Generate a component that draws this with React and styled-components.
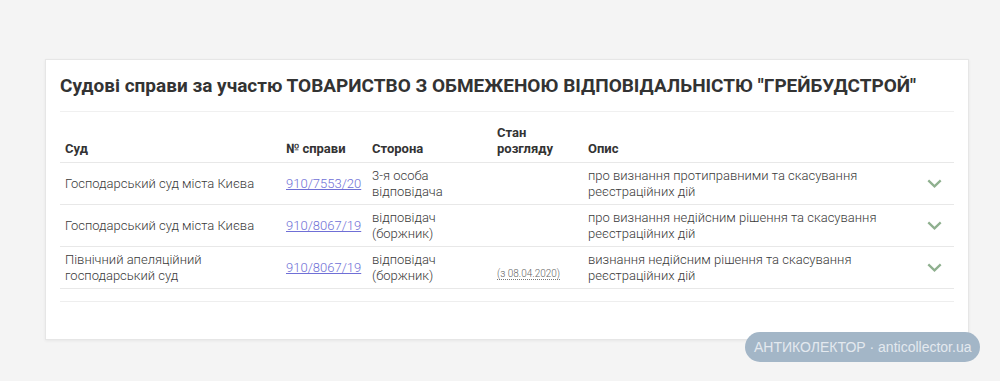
import React from 'react';
import styled, { createGlobalStyle } from 'styled-components';

const GlobalStyle = createGlobalStyle`
  html, body {
    margin: 0;
    padding: 0;
    background: #f4f4f4;
    font-family: Roboto, "Noto Sans", sans-serif;
  }
`;

const cases = [
  {
    court: 'Господарський суд міста Києва',
    number: '910/7553/20',
    side: ['3-я особа', 'відповідача'],
    state: '',
    desc: ['про визнання протиправними та скасування', 'реєстраційних дій'],
  },
  {
    court: 'Господарський суд міста Києва',
    number: '910/8067/19',
    side: ['відповідач', '(боржник)'],
    state: '',
    desc: ['про визнання недійсним рішення та скасування', 'реєстраційних дій'],
  },
  {
    court: ['Північний апеляційний', 'господарський суд'],
    number: '910/8067/19',
    side: ['відповідач', '(боржник)'],
    state: '(з 08.04.2020)',
    desc: ['визнання недійсним рішення та скасування', 'реєстраційних дій'],
  },
];

const columns = [221, 86, 125, 91, 332, 39];

function Lines({ value }) {
  if (!Array.isArray(value)) return value;
  return value.map((line, i) => (
    <React.Fragment key={i}>
      {i > 0 && <br />}
      {line}
    </React.Fragment>
  ));
}

function Chevron() {
  return (
    <svg width="15" height="9" viewBox="0 0 15 9">
      <path d="M1.3 1.3 L7.5 7.3 L13.7 1.3" fill="none" stroke="#8fb08f" strokeWidth="2.3" />
    </svg>
  );
}

export default function App() {
  return (
    <>
      <GlobalStyle />
      <Page>
        <Card>
          <Title>
            Судові справи за участю ТОВАРИСТВО З ОБМЕЖЕНОЮ ВІДПОВІДАЛЬНІСТЮ "ГРЕЙБУДСТРОЙ"
          </Title>
          <Table>
            <colgroup>
              {columns.map((w, i) => <col key={i} style={{ width: w }} />)}
            </colgroup>
            <thead>
              <tr>
                <Th>Суд</Th>
                <Th>№ справи</Th>
                <Th>Сторона</Th>
                <Th>Стан<br />розгляду</Th>
                <Th>Опис</Th>
                <Th />
              </tr>
            </thead>
            <tbody>
              {cases.map((c, i) => (
                <tr key={i}>
                  <Td><Lines value={c.court} /></Td>
                  <Td><CaseLink href="#">{c.number}</CaseLink></Td>
                  <Td><Lines value={c.side} /></Td>
                  <Td>{c.state && <StateDate>{c.state}</StateDate>}</Td>
                  <Td><Lines value={c.desc} /></Td>
                  <ToggleCell><Chevron /></ToggleCell>
                </tr>
              ))}
            </tbody>
          </Table>
          <Footer />
        </Card>
      </Page>
      <Badge>АНТИКОЛЕКТОР · anticollector.ua</Badge>
    </>
  );
}

const Page = styled.div`
  width: 1000px;
  height: 381px;
  padding: 59px 0 0 45px;
  box-sizing: border-box;
`;

const Card = styled.section`
  width: 924px;
  height: 281px;
  box-sizing: border-box;
  background: #fff;
  border: 1px solid #e6e6e6;
  box-shadow: 0 1px 3px rgba(0, 0, 0, 0.06);
  padding: 12px 14px 0 14px;
`;

const Title = styled.h2`
  margin: 0;
  padding: 2px 0 13px;
  font-size: 19px;
  font-weight: 700;
  color: #333;
  line-height: 24px;
  border-bottom: 1px solid #f0f0f0;
`;

const Table = styled.table`
  width: 894px;
  table-layout: fixed;
  border-collapse: collapse;
  margin-top: 13px;
`;

const Th = styled.th`
  text-align: left;
  vertical-align: bottom;
  font-size: 13px;
  font-weight: 700;
  color: #333;
  line-height: 16px;
  padding: 0 5px 5px;
  border-bottom: 1px solid #e8e8e8;
`;

const Td = styled.td`
  font-size: 13px;
  font-weight: 300;
  color: #3a3a3a;
  line-height: 16px;
  padding: 5px 5px 4px;
  height: 32px;
  vertical-align: middle;
  border-bottom: 1px solid #e8e8e8;
`;

const ToggleCell = styled(Td)`
  text-align: center;
  padding: 0;
`;

const CaseLink = styled.a`
  color: #6f6fd6;
  text-decoration: underline;
`;

const StateDate = styled.span`
  font-size: 10px;
  color: #666;
  border-bottom: 1px dotted #777;
  position: relative;
  top: 5px;
`;

const Footer = styled.div`
  margin-top: 12px;
  border-top: 1px solid #eeeeee;
`;

const Badge = styled.div`
  position: fixed;
  left: 745px;
  top: 332px;
  height: 30px;
  padding: 0 9px;
  border-radius: 15px;
  background: #a3b6c7;
  color: #e3e9ef;
  font-family: "Liberation Sans", Arial, sans-serif;
  font-size: 14px;
  line-height: 30px;
  white-space: nowrap;
`;
